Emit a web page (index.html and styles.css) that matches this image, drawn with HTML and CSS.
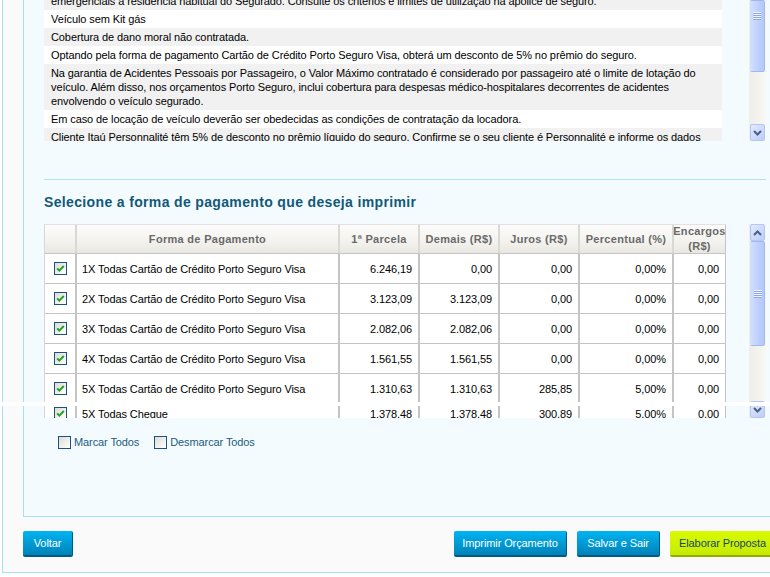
FILE: index.html
```html
<!DOCTYPE html>
<html lang="pt-BR">
<head>
<meta charset="utf-8">
<title>Forma de pagamento</title>
<link rel="stylesheet" href="styles.css">
</head>
<body>
<div class="outer">
  <div class="inner">
    <div class="notes-wrap">
      <div class="notes">
        <div class="note-list">
          <div class="note alt">emergenciais à residência habitual do Segurado. Consulte os critérios e limites de utilização na apólice de seguro.</div>
          <div class="note">Veículo sem Kit gás</div>
          <div class="note alt">Cobertura de dano moral não contratada.</div>
          <div class="note">Optando pela forma de pagamento Cartão de Crédito Porto Seguro Visa, obterá um desconto de 5% no prêmio do seguro.</div>
          <div class="note alt">Na garantia de Acidentes Pessoais por Passageiro, o Valor Máximo contratado é considerado por passageiro até o limite de lotação do<br>veículo. Além disso, nos orçamentos Porto Seguro, inclui cobertura para despesas médico-hospitalares decorrentes de acidentes<br>envolvendo o veículo segurado.</div>
          <div class="note">Em caso de locação de veículo deverão ser obedecidas as condições de contratação da locadora.</div>
          <div class="note alt">Cliente Itaú Personnalité têm 5% de desconto no prêmio líquido do seguro. Confirme se o seu cliente é Personnalité e informe os dados</div>
        </div>
      </div>
      <div class="vscroll notes-sb">
        <div class="sb-thumb top-grip"><span class="grip"></span></div>
        <div class="sb-track"></div>
        <div class="sb-btn"><svg width="9" height="6" viewBox="0 0 9 6"><path d="M1 1 4.5 4.5 8 1" fill="none" stroke="#4d6185" stroke-width="2"/></svg></div>
      </div>
    </div>

    <div class="divider"></div>

    <h2 class="section-title">Selecione a forma de pagamento que deseja imprimir</h2>

    <div class="grid-wrap">
      <div class="pay-table">
        <div class="tr head">
          <div class="th"></div>
          <div class="th">Forma de Pagamento</div>
          <div class="th">1ª Parcela</div>
          <div class="th">Demais (R$)</div>
          <div class="th">Juros (R$)</div>
          <div class="th">Percentual (%)</div>
          <div class="th two">Encargos<br>(R$)</div>
        </div>
        <div class="tbody">
          <div class="tr">
            <div class="td chk"><span class="cb"><svg width="11" height="11" viewBox="0 0 11 11"><path d="M2.2 5.3 4.3 7.6 8.8 3" fill="none" stroke="#22a322" stroke-width="2"/></svg></span></div>
            <div class="td name">1X Todas Cartão de Crédito Porto Seguro Visa</div>
            <div class="td num">6.246,19</div>
            <div class="td num">0,00</div>
            <div class="td num">0,00</div>
            <div class="td num">0,00%</div>
            <div class="td num">0,00</div>
          </div>
          <div class="tr">
            <div class="td chk"><span class="cb"><svg width="11" height="11" viewBox="0 0 11 11"><path d="M2.2 5.3 4.3 7.6 8.8 3" fill="none" stroke="#22a322" stroke-width="2"/></svg></span></div>
            <div class="td name">2X Todas Cartão de Crédito Porto Seguro Visa</div>
            <div class="td num">3.123,09</div>
            <div class="td num">3.123,09</div>
            <div class="td num">0,00</div>
            <div class="td num">0,00%</div>
            <div class="td num">0,00</div>
          </div>
          <div class="tr">
            <div class="td chk"><span class="cb"><svg width="11" height="11" viewBox="0 0 11 11"><path d="M2.2 5.3 4.3 7.6 8.8 3" fill="none" stroke="#22a322" stroke-width="2"/></svg></span></div>
            <div class="td name">3X Todas Cartão de Crédito Porto Seguro Visa</div>
            <div class="td num">2.082,06</div>
            <div class="td num">2.082,06</div>
            <div class="td num">0,00</div>
            <div class="td num">0,00%</div>
            <div class="td num">0,00</div>
          </div>
          <div class="tr">
            <div class="td chk"><span class="cb"><svg width="11" height="11" viewBox="0 0 11 11"><path d="M2.2 5.3 4.3 7.6 8.8 3" fill="none" stroke="#22a322" stroke-width="2"/></svg></span></div>
            <div class="td name">4X Todas Cartão de Crédito Porto Seguro Visa</div>
            <div class="td num">1.561,55</div>
            <div class="td num">1.561,55</div>
            <div class="td num">0,00</div>
            <div class="td num">0,00%</div>
            <div class="td num">0,00</div>
          </div>
          <div class="tr">
            <div class="td chk"><span class="cb"><svg width="11" height="11" viewBox="0 0 11 11"><path d="M2.2 5.3 4.3 7.6 8.8 3" fill="none" stroke="#22a322" stroke-width="2"/></svg></span></div>
            <div class="td name">5X Todas Cartão de Crédito Porto Seguro Visa</div>
            <div class="td num">1.310,63</div>
            <div class="td num">1.310,63</div>
            <div class="td num">285,85</div>
            <div class="td num">5,00%</div>
            <div class="td num">0,00</div>
          </div>
          <div class="tr cut">
            <div class="td chk"><span class="cb"><svg width="11" height="11" viewBox="0 0 11 11"><path d="M2.2 5.3 4.3 7.6 8.8 3" fill="none" stroke="#22a322" stroke-width="2"/></svg></span></div>
            <div class="td name">5X Todas Cheque</div>
            <div class="td num">1.378,48</div>
            <div class="td num">1.378,48</div>
            <div class="td num">300,89</div>
            <div class="td num">5,00%</div>
            <div class="td num">0,00</div>
          </div>
        </div>
      </div>
      <div class="vscroll table-sb">
        <div class="sb-btn"><svg width="9" height="6" viewBox="0 0 9 6"><path d="M1 5 4.5 1.5 8 5" fill="none" stroke="#4d6185" stroke-width="2"/></svg></div>
        <div class="sb-thumb"><span class="grip"></span></div>
        <div class="sb-track"></div>
        <div class="sb-btn"><svg width="9" height="6" viewBox="0 0 9 6"><path d="M1 1 4.5 4.5 8 1" fill="none" stroke="#4d6185" stroke-width="2"/></svg></div>
      </div>
    </div>

    <div class="bulk">
      <label class="bulk-item"><span class="cb"></span><span class="bulk-text">Marcar Todos</span></label>
      <label class="bulk-item"><span class="cb"></span><span class="bulk-text">Desmarcar Todos</span></label>
    </div>
  </div>

  <div class="actions">
    <button class="btn w-voltar">Voltar</button>
    <div class="actions-right">
      <button class="btn w-imprimir">Imprimir Orçamento</button>
      <button class="btn w-salvar">Salvar e Sair</button>
      <button class="btn btn-lime w-elaborar">Elaborar Proposta</button>
    </div>
  </div>
</div>
<div class="seam"></div>
</body>
</html>
```

FILE: styles.css
```css
html, body {
  overflow: hidden;
}

body {
  margin: 0;
  background: #ffffff;
  font-family: "Liberation Sans", Arial, sans-serif;
  font-size: 11px;
  letter-spacing: -0.1px;
  color: #000;
}

.outer {
  margin-left: 2px;
  width: 805px;
  box-sizing: border-box;
  border-left: 1px solid #a6e0f4;
  border-bottom: 1px solid #a6e0f4;
  background: #fafafa;
  padding: 0 20px 15px 20px;
}

.inner {
  width: 764px;
  box-sizing: border-box;
  border-left: 1px solid #a6e0f4;
  border-right: 1px solid #a6e0f4;
  border-bottom: 1px solid #a6e0f4;
  background: #f4fbfe;
  padding: 0 20px 67px 20px;
}

/* ---------- notes list ---------- */
.notes-wrap {
  display: flex;
  justify-content: space-between;
  height: 141px;
}

.notes {
  width: 678px;
  height: 141px;
  overflow: hidden;
  background: #fff;
}

.note-list {
  margin-top: -8px;
}

.note {
  padding: 2px 7px;
  line-height: 14px;
  white-space: nowrap;
  background: #fff;
}

.note.alt {
  background: #f1f1f1;
}

/* ---------- scrollbars ---------- */
.vscroll {
  width: 17px;
  box-sizing: border-box;
  padding: 0 1px;
  background: linear-gradient(90deg, #eeede7, #f8f8f4);
  display: flex;
  flex-direction: column;
}

.notes-sb {
  height: 141px;
}

.table-sb {
  height: 194px;
}

.sb-btn {
  height: 17px;
  flex: none;
  box-sizing: border-box;
  border: 1px solid #b3c6f4;
  border-radius: 2px;
  background: linear-gradient(135deg, #e0e9fe, #bccdf8);
  display: flex;
  align-items: center;
  justify-content: center;
}

.sb-thumb {
  flex: none;
  box-sizing: border-box;
  border: 1px solid #a2b7ec;
  border-left-color: #d3dffd;
  border-radius: 2px;
  background: linear-gradient(90deg, #d1defe, #bccffc 60%, #b4c8fa);
  display: flex;
  align-items: center;
  justify-content: center;
}

.notes-sb .sb-thumb {
  height: 72px;
  justify-content: flex-start;
  align-items: flex-start;
  padding: 11px 0 0 2px;
}

.table-sb .sb-thumb {
  height: 105px;
}

.grip {
  display: block;
  width: 8px;
  height: 8px;
  background: repeating-linear-gradient(180deg, #eef3ff 0 1px, #8ea8e8 1px 2px);
}

.sb-track {
  flex: 1;
}

/* ---------- section heading ---------- */
.divider {
  margin-top: 38px;
  height: 1px;
  background: #ade2f4;
}

.section-title {
  margin: 13px 0 0 0;
  font-size: 14px;
  line-height: 18px;
  font-weight: bold;
  letter-spacing: 0.35px;
  color: #125878;
}

/* ---------- payment table ---------- */
.grid-wrap {
  margin-top: 13px;
  display: flex;
  justify-content: space-between;
  align-items: flex-start;
}

.pay-table {
  width: 682px;
  box-sizing: border-box;
  border-left: 1px solid #d6d6d6;
  border-top: 1px solid #e2e2e2;
  background: #fff;
}

.tr {
  display: grid;
  grid-template-columns: 32px 263px 80px 80px 80px 94px 52px;
  background: #fff;
}

.th {
  height: 29px;
  box-sizing: border-box;
  border-right: 2px solid #d9d8d3;
  border-bottom: 1px solid #c4c4c4;
  background: linear-gradient(180deg, #fcfcfb 0%, #f3f2ee 60%, #e9e7e1 100%);
  display: flex;
  align-items: center;
  justify-content: center;
  text-align: center;
  font-weight: bold;
  letter-spacing: 0.3px;
  color: #6a6a6a;
  line-height: 15px;
  white-space: nowrap;
}

.th:last-child {
  border-right: 1px solid #c4c4c4;
}

.tbody {
  height: 164px;
  overflow: hidden;
}

.td {
  height: 30px;
  box-sizing: border-box;
  border-right: 2px solid #c4c4c4;
  border-bottom: 1px solid #c4c4c4;
  display: flex;
  align-items: center;
  padding: 0 6px;
  white-space: nowrap;
}

.td:last-child {
  border-right: 1px solid #c4c4c4;
}

.td.chk {
  padding: 0 0 0 9px;
}

.td.name {
  padding-left: 5px;
}

.td.num {
  justify-content: flex-end;
}

.tr.cut {
  margin-top: -5px;
}

/* ---------- checkbox ---------- */
.cb {
  width: 13px;
  height: 13px;
  flex: none;
  box-sizing: border-box;
  border: 1px solid #1c5180;
  background: linear-gradient(135deg, #dcdcd4, #ffffff);
  display: inline-flex;
}

.cb svg {
  display: block;
}

/* ---------- mark all ---------- */
.bulk {
  margin: 18px 0 0 14px;
  height: 13px;
  display: flex;
  align-items: center;
}

.bulk-item {
  display: flex;
  align-items: center;
  margin-right: 15px;
  color: #1b5b7e;
}

.bulk-text {
  margin-left: 3px;
  line-height: 13px;
}

/* ---------- actions ---------- */
.actions {
  margin-top: 14px;
  width: 753px;
  display: flex;
  align-items: flex-start;
}

.actions-right {
  margin-left: auto;
  display: flex;
  gap: 10px;
}

.btn {
  height: 26px;
  box-sizing: border-box;
  padding: 0;
  border: 0;
  border-right: 1px solid #045a80;
  border-bottom: 2px solid #045a80;
  border-radius: 2px;
  background: linear-gradient(180deg, #00b4f2, #0082b9);
  color: #fff;
  font-family: "Liberation Sans", Arial, sans-serif;
  font-size: 11px;
  letter-spacing: -0.1px;
  display: flex;
  align-items: center;
  justify-content: center;
  white-space: nowrap;
}

.btn-lime {
  background: linear-gradient(180deg, #d9fb00, #c6eb00);
  border-right-color: #93ae00;
  border-bottom-color: #93ae00;
  color: #16466b;
}

.w-voltar { width: 50px; }
.w-imprimir { width: 113px; }
.w-salvar { width: 83px; }
.w-elaborar { width: 106px; }

/* stitched-capture seam */
.seam {
  position: absolute;
  left: 0;
  top: 402px;
  width: 100%;
  height: 4px;
  background: #fff;
}
```
